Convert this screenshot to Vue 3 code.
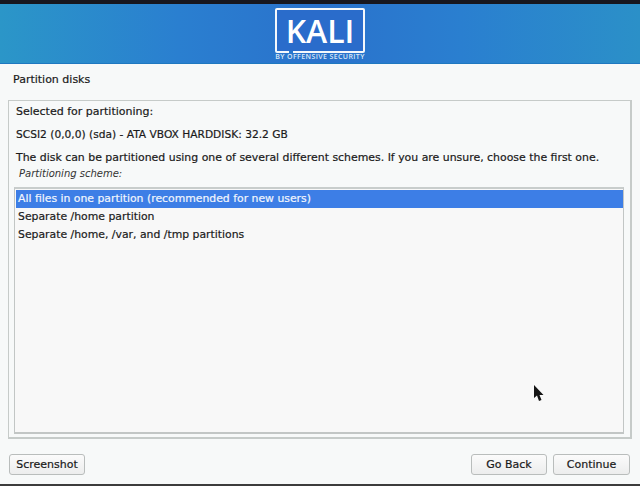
<script setup>
const options = [
  'All files in one partition (recommended for new users)',
  'Separate /home partition',
  'Separate /home, /var, and /tmp partitions'
]
</script>

<template>
  <div class="page">
    <div class="topbar"></div>
    <header class="banner">
      <div class="logo">
        <div class="logo-box">
          <span class="logo-text">KALI</span>
          <span class="notch"></span>
        </div>
        <div class="tagline">BY OFFENSIVE SECURITY</div>
      </div>
    </header>
    <main class="content">
      <h1 class="title">Partition disks</h1>
      <section class="panel">
        <p class="line first">Selected for partitioning:</p>
        <p class="line narrow">SCSI2 (0,0,0) (sda) - ATA VBOX HARDDISK: 32.2 GB</p>
        <p class="line long">The disk can be partitioned using one of several different schemes. If you are unsure, choose the first one.</p>
        <p class="scheme">Partitioning scheme:</p>
        <ul class="list">
          <li v-for="(o, i) in options" :key="o" class="item" :class="{ selected: i === 0 }">{{ o }}</li>
          <svg class="cursor" width="12" height="18" viewBox="0 0 12 18">
            <path d="M1 0 L1 13 L4 10.5 L6 16 L8.5 15 L6.5 10 L10.5 10 Z" fill="#151515" />
          </svg>
        </ul>
      </section>
      <footer class="actions">
        <button class="btn first-btn">Screenshot</button>
        <div class="right">
          <button class="btn">Go Back</button>
          <button class="btn last">Continue</button>
        </div>
      </footer>
    </main>
    <div class="bottombar"></div>
  </div>
</template>

<style>
html, body { margin: 0; padding: 0; background: #f7f9f9; }
</style>

<style scoped>
.page {
  width: 640px;
  height: 486px;
  display: flex;
  flex-direction: column;
  overflow: hidden;
  background: #f7f9f9;
  font-family: "DejaVu Sans", sans-serif;
  color: #1a1a1a;
  -webkit-text-stroke: 0.2px currentColor;
}
.topbar { height: 4px; background: #17171f; flex: none; }
.banner {
  height: 60px;
  flex: none;
  display: flex;
  justify-content: center;
  background: linear-gradient(90deg, #2b96c8 0%, #2a7fd0 28%, #2a72cc 50%, #2a7fd0 72%, #2b90c8 100%);
  border-bottom: 1px solid #1f78c0;
  box-sizing: border-box;
}
.logo {
  width: 90px;
  padding-top: 4px;
  display: flex;
  flex-direction: column;
  align-items: center;
}
.logo-box {
  position: relative;
  width: 90px;
  height: 45px;
  box-sizing: border-box;
  border: 2.5px solid #f4f8fc;
  border-radius: 2px;
  background: #2a6ccb;
  display: flex;
  align-items: center;
  justify-content: center;
}
.logo-text {
  font-family: "Open Sans", sans-serif;
  font-size: 32px;
  font-weight: 600;
  line-height: 1;
  color: #fff;
  -webkit-text-stroke: 0;
}
.notch {
  position: absolute;
  left: 12px;
  bottom: -3px;
  width: 4px;
  height: 3px;
  background: #2a78cc;
}
.tagline {
  font-family: "Open Sans", sans-serif;
  font-size: 7px;
  font-weight: 600;
  line-height: 8px;
  margin-top: 0;
  color: #dbe8f6;
  letter-spacing: 0.4px;
  white-space: nowrap;
  -webkit-text-stroke: 0;
}
.content {
  flex: 1;
  display: flex;
  flex-direction: column;
  padding: 0 8px;
  min-height: 0;
}
.title {
  margin: 10px 0 0 5px;
  font-size: 11px;
  line-height: 12px;
  font-weight: 400;
  height: 26px;
}
.panel {
  height: 339px;
  flex: none;
  box-sizing: border-box;
  border: 1px solid #c6cbc9;
  border-right-width: 2px;
  border-bottom-width: 2px;
  padding: 0 6px 3px 5px;
  display: flex;
  flex-direction: column;
}
.line {
  margin: 0 0 0 2px;
  font-size: 11px;
  line-height: 12px;
  padding-top: 11px;
  white-space: nowrap;
}
.line.first { padding-top: 5px; }
.line.narrow { font-size: 10.65px; }
.line.long { font-size: 10.92px; }
.scheme {
  margin: 4px 0 7px 5px;
  font-size: 10px;
  line-height: 12px;
  font-style: italic;
  color: #333;
  -webkit-text-stroke: 0;
}
.list {
  position: relative;
  flex: 1;
  margin: 0;
  padding: 0.5px 0 0 1px;
  list-style: none;
  background: #f8f8f8;
  border: 1px solid #c2c6c5;
  border-top: 2px solid #c8cdcc;
  border-bottom-width: 2px;
}
.item {
  height: 18.5px;
  line-height: 18px;
  padding-left: 2px;
  font-size: 10.85px;
  white-space: nowrap;
}
.item.selected {
  height: 18px;
  background: #3d7ee6;
  color: #f2f6fd;
}
.cursor {
  position: absolute;
  left: 518px;
  top: 196px;
}
.actions {
  display: flex;
  justify-content: space-between;
  padding-top: 15px;
}
.right { display: flex; gap: 6px; margin-right: 2px; margin-left: auto; }
.first-btn { margin-left: 1px; }
.btn {
  width: 76px;
  height: 21px;
  padding: 0;
  box-sizing: border-box;
  border: 1px solid #b9bdbc;
  border-radius: 3px;
  background: linear-gradient(#fbfbfb, #eceded);
  font-family: "DejaVu Sans", sans-serif;
  font-size: 11px;
  color: #1a1a1a;
}
.btn.last { width: 77px; }
.bottombar {
  height: 2px;
  flex: none;
  background: #3c3c3c;
}
</style>
